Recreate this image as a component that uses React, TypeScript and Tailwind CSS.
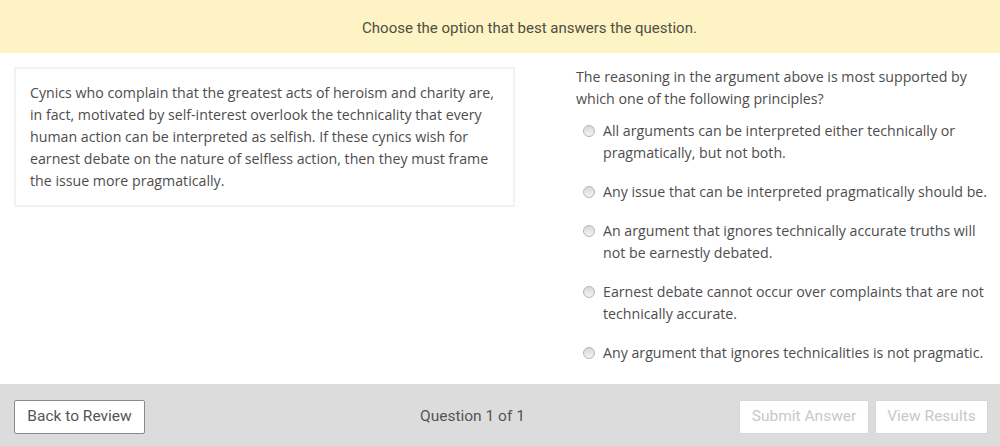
import React from "react";

const options = [
  "All arguments can be interpreted either technically or pragmatically, but not both.",
  "Any issue that can be interpreted pragmatically should be.",
  "An argument that ignores technically accurate truths will not be earnestly debated.",
  "Earnest debate cannot occur over complaints that are not technically accurate.",
  "Any argument that ignores technicalities is not pragmatic.",
];

function Radio() {
  return (
    <span className="mt-[5px] w-[12px] h-[12px] shrink-0 rounded-full border border-[#b5b5b5] bg-gradient-to-b from-[#d8d8d8] to-[#f4f4f4]" />
  );
}

export default function App() {
  return (
    <div className="w-[1000px] h-[446px] flex flex-col bg-white overflow-hidden font-['Open_Sans',sans-serif]">
      <div className="h-[53px] shrink-0 bg-[#fdf3c4] flex items-center justify-center text-[15px] text-[#4f4f42] font-['Roboto',sans-serif] pl-[59px] pt-[3px]">
        Choose the option that best answers the question.
      </div>
      <div className="flex-1 flex">
        <div className="w-[576px] shrink-0 pl-[14px] pt-[14px]">
          <div className="w-[501px] h-[140px] border-2 border-[#f2f2f2] pl-[14px] pr-[12px] pt-[13px] text-[14.2px] leading-[22px] text-[#4d4d4d]">
            Cynics who complain that the greatest acts of heroism and charity are, in fact, motivated by self-interest overlook the technicality that every human action can be interpreted as selfish. If these cynics wish for earnest debate on the nature of selfless action, then they must frame the issue more pragmatically.
          </div>
        </div>
        <div className="flex-1 pt-[13px] pr-[6px] text-[14.2px] leading-[22px] text-[#4d4d4d]">
          <div className="w-[400px]">
            The reasoning in the argument above is most supported by which one of the following principles?
          </div>
          <div className="flex flex-col gap-[17px] mt-[10px] pl-[7px]">
            {options.map((o, i) => (
              <div key={i} className="flex gap-[8px] items-start">
                <Radio />
                <span className="w-[392px]">{o}</span>
              </div>
            ))}
          </div>
        </div>
      </div>
      <div className="h-[62px] shrink-0 bg-[#dcdcdd] flex items-center pl-[14px] pr-[12px] pt-[4px] font-['Roboto',sans-serif] text-[15.5px]">
        <button className="h-[34px] w-[131px] bg-white border border-[#8a8a8a] rounded-[2px] text-[#555]">
          Back to Review
        </button>
        <div className="ml-[275px] text-[#555]">Question 1 of 1</div>
        <div className="ml-auto flex gap-[6px]">
          <button className="h-[34px] w-[130px] bg-white border border-[#d6d6d6] rounded-[2px] text-[#c8c8c8]">
            Submit Answer
          </button>
          <button className="h-[34px] w-[113px] bg-white border border-[#d6d6d6] rounded-[2px] text-[#c8c8c8]">
            View Results
          </button>
        </div>
      </div>
    </div>
  );
}
